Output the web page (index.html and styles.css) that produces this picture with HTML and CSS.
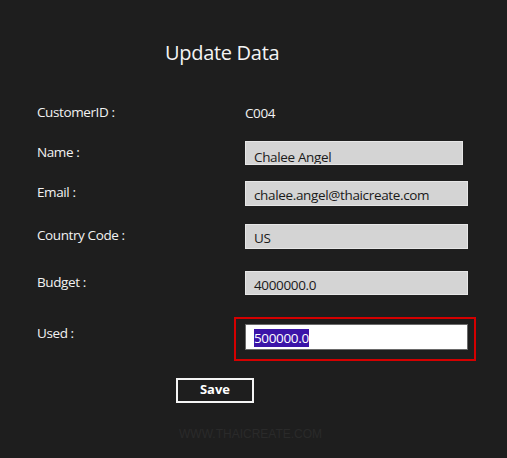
FILE: index.html
```html
<!DOCTYPE html>
<html>
<head>
<meta charset="utf-8">
<link rel="stylesheet" href="styles.css">
</head>
<body>
<div class="page">
  <h1 class="title">Update Data</h1>
  <div class="form">
    <div class="row row-id">
      <div class="label">CustomerID :</div>
      <div class="plain">C004</div>
    </div>
    <div class="row row-name">
      <div class="label">Name :</div>
      <div class="box box-name">Chalee Angel</div>
    </div>
    <div class="row row-email">
      <div class="label">Email :</div>
      <div class="box">chalee.angel@thaicreate.com</div>
    </div>
    <div class="row row-country">
      <div class="label">Country Code :</div>
      <div class="box">US</div>
    </div>
    <div class="row row-budget">
      <div class="label">Budget :</div>
      <div class="box">4000000.0</div>
    </div>
    <div class="row row-used">
      <div class="label label-used">Used :</div>
      <div class="box box-active"><span class="sel">500000.0</span><div class="highlight"></div></div>
    </div>
  </div>
  <div class="actions">
    <button class="save">Save</button>
  </div>
  <div class="watermark">WWW.THAICREATE.COM</div>
</div>
</body>
</html>
```
FILE: styles.css
```css
html, body {
  margin: 0;
  padding: 0;
  background: #1e1e1e;
}
body {
  width: 507px;
  height: 458px;
  overflow: hidden;
  font-family: "Open Sans", "Noto Sans", sans-serif;
  color: #ffffff;
}
.page {
  padding-top: 38px;
}
.title {
  margin: 0 0 0 165px;
  font-weight: 400;
  font-size: 20px;
  line-height: 30px;
  color: #f4f4f4;
  letter-spacing: -0.3px;
}
.form {
  padding-left: 37px;
  margin-top: 33px;
}
.row {
  display: grid;
  grid-template-columns: 208px 223px;
  align-items: center;
  height: 24px;
}
.label {
  font-size: 13.5px;
  line-height: 18px;
  color: #f2f2f2;
  padding-bottom: 3px;
  letter-spacing: -0.4px;
}
.label-used {
  padding-bottom: 8px;
}
.plain {
  font-size: 13.5px;
  line-height: 18px;
  color: #f2f2f2;
  padding-bottom: 1px;
  letter-spacing: -0.4px;
}
.row-name { margin-top: 16px; }
.row-email { margin-top: 16px; height: 25px; }
.row-country { margin-top: 18px; height: 25px; }
.row-budget { margin-top: 22px; }
.row-used { margin-top: 29px; height: 25px; }
.box {
  box-sizing: border-box;
  height: 100%;
  background: #d4d4d4;
  border: 1px solid #e6e6e6;
  color: #1a1a1a;
  font-size: 13.5px;
  line-height: 18px;
  padding: 4px 0 0 8px;
  overflow: hidden;
  white-space: nowrap;
  letter-spacing: -0.35px;
}
.box-name {
  width: 218px;
  padding-top: 6px;
}
.box-active {
  position: relative;
  overflow: visible;
  background: #ffffff;
  border: 1px solid #6a6a6a;
}
.sel {
  background: #3b14a8;
  color: #ffffff;
}
.highlight {
  position: absolute;
  left: -12px;
  top: -8px;
  right: -9px;
  bottom: -12px;
  border: 2px solid #d40000;
}
.actions {
  padding-left: 176px;
  margin-top: 28px;
}
.save {
  box-sizing: border-box;
  width: 78px;
  height: 25px;
  background: #1e1e1e;
  border: 2px solid #f4f4f4;
  color: #ffffff;
  font-family: "Open Sans", "Noto Sans", sans-serif;
  font-weight: 700;
  font-size: 13px;
  line-height: 18px;
  padding: 0 0 3px 0;
}
.watermark {
  margin: 24px 0 0 179px;
  font-family: "Liberation Sans", Arial, sans-serif;
  font-size: 12px;
  line-height: 14px;
  color: #2a2a2a;
  letter-spacing: 0;
}
```
